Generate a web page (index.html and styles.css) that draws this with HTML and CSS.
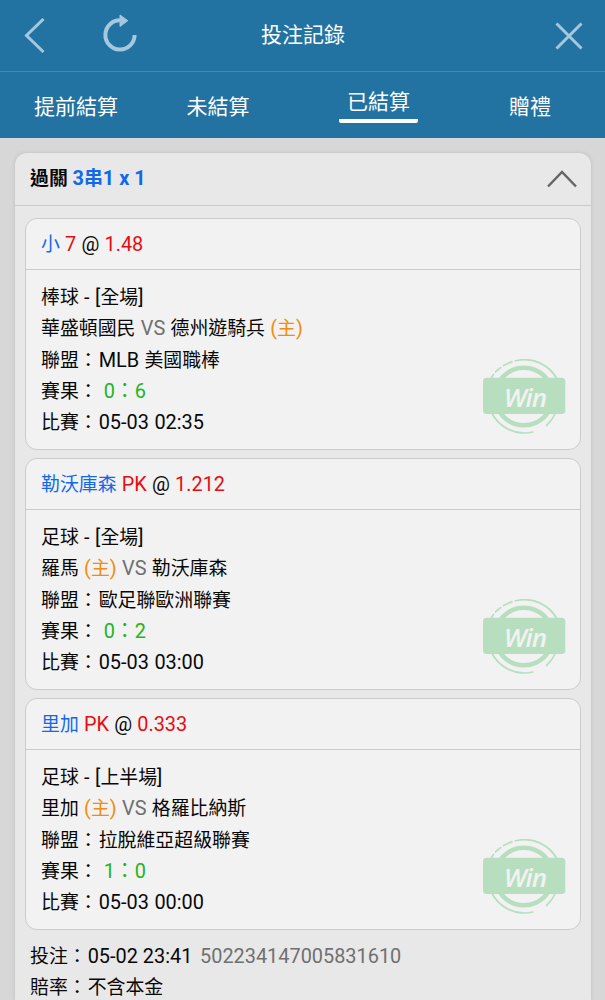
FILE: index.html
```html
<!DOCTYPE html>
<html lang="zh-Hant">
<head>
<meta charset="UTF-8">
<meta name="viewport" content="width=device-width, initial-scale=1.0">
<title>投注記錄</title>
<link rel="stylesheet" href="styles.css">
</head>
<body>
<svg class="defs" width="0" height="0">
<symbol id="win" viewBox="0 0 84 78">
<g fill="none" stroke="#b7dfbf">
<circle cx="42" cy="37.5" r="28.8" stroke-width="4.6"/>
<path stroke-width="1.7" stroke-linecap="round" d="M33.5 1.8A36.7 36.7 0 0 1 75.2 20.5M13.5 12.9A37.3 37.3 0 0 1 18.7 8.6M21.5 6.6A37.3 37.3 0 0 1 30 2.9M8.5 20.5A37.3 37.3 0 0 1 11.5 15.5M9.5 53.5A36.7 36.7 0 0 0 50.7 73M73.5 54A37.3 37.3 0 0 1 64.5 66.5"/>
</g>
<rect x="1" y="18.7" width="82.3" height="36.3" rx="3.5" fill="#b7dfbf"/>
</symbol>
</svg>

<header>
<div class="topbar">
<svg class="back" width="22" height="36" viewBox="0 0 22 36"><path d="M19.5 1L2.5 17.5L19.5 34"/></svg>
<svg class="reload" width="36" height="40" viewBox="0 0 36 40"><path d="M19 6.4A14.6 14.6 0 1 0 32.6 21"/><path class="tip" d="M18 1V12.5L25.8 6.7Z"/></svg>
<h1>投注記錄</h1>
<svg class="close" width="28" height="28" viewBox="0 0 28 28"><path d="M1.5 1.5L26.5 26.5M26.5 1.5L1.5 26.5"/></svg>
</div>
<nav class="tabs">
<a>提前結算</a>
<a>未結算</a>
<a class="active">已結算</a>
<a>贈禮</a>
</nav>
</header>

<main class="ticket">
<div class="ticket-head">
<div>過關 <span class="blue"><span class="num">3</span>串<span class="num">1 x 1</span></span></div>
<svg width="30" height="18" viewBox="0 0 30 18"><path d="M1 16.5L15 2L29 16.5"/></svg>
</div>

<section class="bet">
<div class="bet-head"><span class="blue">小</span> <span class="red num">7</span> <span class="num">@</span> <span class="red num">1.48</span></div>
<div class="bet-body">
<p>棒球 <span class="num">- [</span>全場<span class="num">]</span></p>
<p>華盛頓國民 <span class="vs">VS</span> 德州遊騎兵 <span class="home"><span class="num">(</span>主<span class="num">)</span></span></p>
<p><span class="label">聯盟：</span><span class="num">MLB</span> 美國職棒</p>
<p><span class="label">賽果：</span><span class="score">0：6</span></p>
<p><span class="label">比賽：</span><span class="num">05-03 02:35</span></p>
<svg class="stamp"><use href="#win"/><text x="22" y="47.5" textLength="43">Win</text></svg>
</div>
</section>

<section class="bet">
<div class="bet-head"><span class="blue">勒沃庫森</span> <span class="red num">PK</span> <span class="num">@</span> <span class="red num">1.212</span></div>
<div class="bet-body">
<p>足球 <span class="num">- [</span>全場<span class="num">]</span></p>
<p>羅馬 <span class="home"><span class="num">(</span>主<span class="num">)</span></span> <span class="vs">VS</span> 勒沃庫森</p>
<p><span class="label">聯盟：</span>歐足聯歐洲聯賽</p>
<p><span class="label">賽果：</span><span class="score">0：2</span></p>
<p><span class="label">比賽：</span><span class="num">05-03 03:00</span></p>
<svg class="stamp"><use href="#win"/><text x="22" y="47.5" textLength="43">Win</text></svg>
</div>
</section>

<section class="bet">
<div class="bet-head"><span class="blue">里加</span> <span class="red num">PK</span> <span class="num">@</span> <span class="red num">0.333</span></div>
<div class="bet-body">
<p>足球 <span class="num">- [</span>上半場<span class="num">]</span></p>
<p>里加 <span class="home"><span class="num">(</span>主<span class="num">)</span></span> <span class="vs">VS</span> 格羅比納斯</p>
<p><span class="label">聯盟：</span>拉脫維亞超級聯賽</p>
<p><span class="label">賽果：</span><span class="score">1：0</span></p>
<p><span class="label">比賽：</span><span class="num">05-03 00:00</span></p>
<svg class="stamp"><use href="#win"/><text x="22" y="47.5" textLength="43">Win</text></svg>
</div>
</section>

<div class="ticket-foot">
<p><span class="label">投注：</span><span class="num">05-02 23:41</span> <span class="num serial">502234147005831610</span></p>
<p><span class="label">賠率：</span>不含本金</p>
</div>
</main>
</body>
</html>
```
FILE: styles.css
```css
* {
box-sizing: border-box;
}
body {
margin: 0;
background-color: #d7d7d7;
color: #080808;
font-family: Roboto, "Noto Sans CJK TC", sans-serif;
font-size: 18.9px;
line-height: 31.35px;
}
h1, p {
margin: 0;
}
p {
height: 31.35px;
}
.defs {
position: absolute;
}
header {
height: 138px;
background-color: #2373a2;
color: #fff;
}
.topbar {
display: flex;
align-items: center;
height: 72px;
padding: 0 22px 0 24px;
border-bottom: 1px solid #4489b3;
}
.topbar svg {
fill: none;
stroke: #a5c8df;
stroke-width: 3;
}
.topbar .reload {
margin-left: 56px;
margin-top: -3px;
stroke-width: 4;
}
.topbar .tip {
fill: #a5c8df;
stroke-width: 1;
}
h1 {
margin-left: 123px;
font-size: 21px;
font-weight: 400;
}
.close {
margin-left: auto;
}
.tabs {
display: flex;
height: 66px;
padding: 17px 0 0 5px;
font-size: 21px;
line-height: 36px;
}
.tabs a {
flex: none;
width: 142px;
text-align: center;
}
.tabs .active {
width: 79px;
height: 34px;
margin: 0 37px 0 50px;
line-height: 27px;
border-bottom: 4px solid #fff;
border-radius: 2px;
}
.tabs a:last-child {
width: 150px;
}
.ticket {
margin: 15px 14px 0 15px;
height: 847px;
overflow: hidden;
background-color: #e8e8e8;
border-radius: 12px 12px 0 0;
box-shadow: 0 0 4px rgba(0,0,0,0.12);
}
.ticket-head {
display: flex;
justify-content: space-between;
align-items: center;
height: 53px;
padding: 0 14px 0 15px;
border-bottom: 1px solid #cacaca;
font-weight: 700;
}
.ticket-head svg {
fill: none;
stroke: #666;
stroke-width: 2.5;
}
.bet {
height: 232px;
margin: 12px 10px 8px;
background-color: #f2f2f2;
border: 1px solid #cbcbcb;
border-radius: 12px;
}
.bet + .bet {
margin-top: 0;
}
.bet-head {
height: 51px;
padding: 10px 15px 0;
border-bottom: 1px solid #cbcbcb;
word-spacing: 0.5px;
}
.bet-body {
position: relative;
padding: 12px 15px 0;
word-spacing: 0.6px;
}
.stamp {
position: absolute;
right: 14px;
top: 89px;
width: 84px;
height: 78px;
}
.stamp text {
font-family: "Open Sans", sans-serif;
font-size: 26px;
font-weight: 600;
font-style: italic;
fill: #f2f2f2;
}
.label {
margin-right: 1px;
}
.num, .vs, .score {
font-size: 19.9px;
line-height: 1;
}
.blue {
color: #1069ea;
}
.red {
color: #e60d12;
}
.home {
color: #f58b0b;
}
.vs, .serial {
color: #707070;
}
.score {
margin-left: 5px;
color: #20b51d;
}
.ticket-foot {
padding: 3px 15px 0;
}
.serial {
margin-left: 3px;
}
```
